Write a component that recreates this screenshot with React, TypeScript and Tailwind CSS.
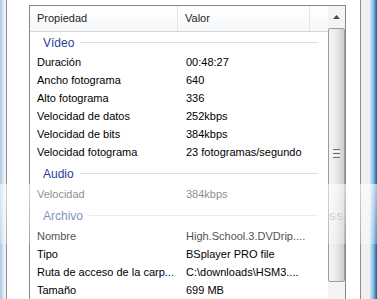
import React from 'react'

type Row = { k: string; v?: string }
type Group = { title: string; h: string; rows: Row[] }

const groups: Group[] = [
  {
    title: 'Vídeo',
    h: 'h-[21px]',
    rows: [
      { k: 'Duración', v: '00:48:27' },
      { k: 'Ancho fotograma', v: '640' },
      { k: 'Alto fotograma', v: '336' },
      { k: 'Velocidad de datos', v: '252kbps' },
      { k: 'Velocidad de bits', v: '384kbps' },
      { k: 'Velocidad fotograma', v: '23 fotogramas/segundo' },
    ],
  },
  {
    title: 'Audio',
    h: 'mt-px h-[23px]',
    rows: [{ k: 'Velocidad', v: '384kbps' }],
  },
  {
    title: 'Archivo',
    h: 'mt-px h-[23px]',
    rows: [
      { k: 'Nombre', v: 'High.School.3.DVDrip....' },
      { k: 'Tipo', v: 'BSplayer PRO file' },
      { k: 'Ruta de acceso de la carp...', v: 'C:\\downloads\\HSM3....' },
      { k: 'Tamaño', v: '699 MB' },
    ],
  },
]

const Scrollbar = () => (
  <div className="w-[17px] flex flex-col bg-[#f4f4f4]">
    {/* up arrow */}
    <div className="h-[22px] flex items-center justify-center">
      <svg width="7" height="4" viewBox="0 0 7 4">
        <path d="M0 4 L3.5 0 L7 4 Z" fill="#4d4d4d" />
      </svg>
    </div>
    {/* thumb */}
    <div className="h-[254px] rounded-[2px] border border-[#9c9c9c] bg-gradient-to-r from-[#f6f6f6] via-[#e9e9e9] to-[#cdcdcd] flex items-center justify-center">
      <div className="flex flex-col gap-px -mt-1">
        <div className="w-[7px] h-px bg-[#6f6f6f]" />
        <div className="w-[7px] h-px bg-white" />
        <div className="w-[7px] h-px bg-[#6f6f6f]" />
        <div className="w-[7px] h-px bg-white" />
        <div className="w-[7px] h-px bg-[#6f6f6f]" />
      </div>
    </div>
    <div className="flex-1" />
  </div>
)

export default function App() {
  return (
    <div className="relative w-[377px] h-[299px] overflow-hidden flex bg-white text-[11px] text-black font-['Liberation_Sans',Arial,sans-serif]">
      {/* left window frame */}
      <div className="w-[4px] bg-gradient-to-r from-[#a9c7e4] to-[#e2edf8]" />
      <div className="w-[2px] bg-[#f0f0f0]" />
      <div className="w-px bg-[#8d9096]" />

      {/* tab page */}
      <div className="flex-1 bg-white pl-[22px] pr-[14px] pt-[5px]">
        <div className="h-[320px] border border-[#828790] flex">
          <div className="flex-1 flex flex-col">
            {/* header */}
            <div className="h-[26px] flex border-b border-[#d5d5d5] bg-gradient-to-b from-white to-[#f6f7f9] text-[#1f1f1f]">
              <div className="w-[148px] pl-[7px] flex items-center border-r border-[#e3e4e6]">Propiedad</div>
              <div className="w-[132px] pl-[7px] flex items-center border-r border-[#e3e4e6]">Valor</div>
              <div className="flex-1" />
            </div>

            {groups.map((g) => (
              <div key={g.title}>
                <div className={`${g.h} flex items-center pl-[13px] pr-[10px] gap-[6px]`}>
                  <span className="text-[#1e3f9a] text-[12px]">{g.title}</span>
                  <div className="flex-1 h-px bg-[#d9dee6]" />
                </div>
                {g.rows.map((r) => (
                  <div key={r.k} className="h-[18px] flex items-center">
                    <div className="w-[148px] pl-[7px] whitespace-nowrap">{r.k}</div>
                    <div className="pl-[8px] whitespace-nowrap">{r.v}</div>
                  </div>
                ))}
              </div>
            ))}
          </div>
          <Scrollbar />
        </div>
      </div>

      {/* right window frame */}
      <div className="w-px bg-[#8d9096]" />
      <div className="w-[9px] bg-[#f0f0f0]" />
      <div className="w-[7px] bg-gradient-to-r from-[#cde8f8] via-[#7fbbe4] to-[#245a8c]" />

      {/* faded watermark band from the photo host */}
      <div className="absolute left-0 right-0 top-[184px] h-[60px] bg-gradient-to-b from-white/60 to-white/25 pointer-events-none">
        <span className="absolute left-[329px] top-[22px] text-[13px] text-[#cfcfcf] tracking-[1px]">ss</span>
      </div>
    </div>
  )
}
